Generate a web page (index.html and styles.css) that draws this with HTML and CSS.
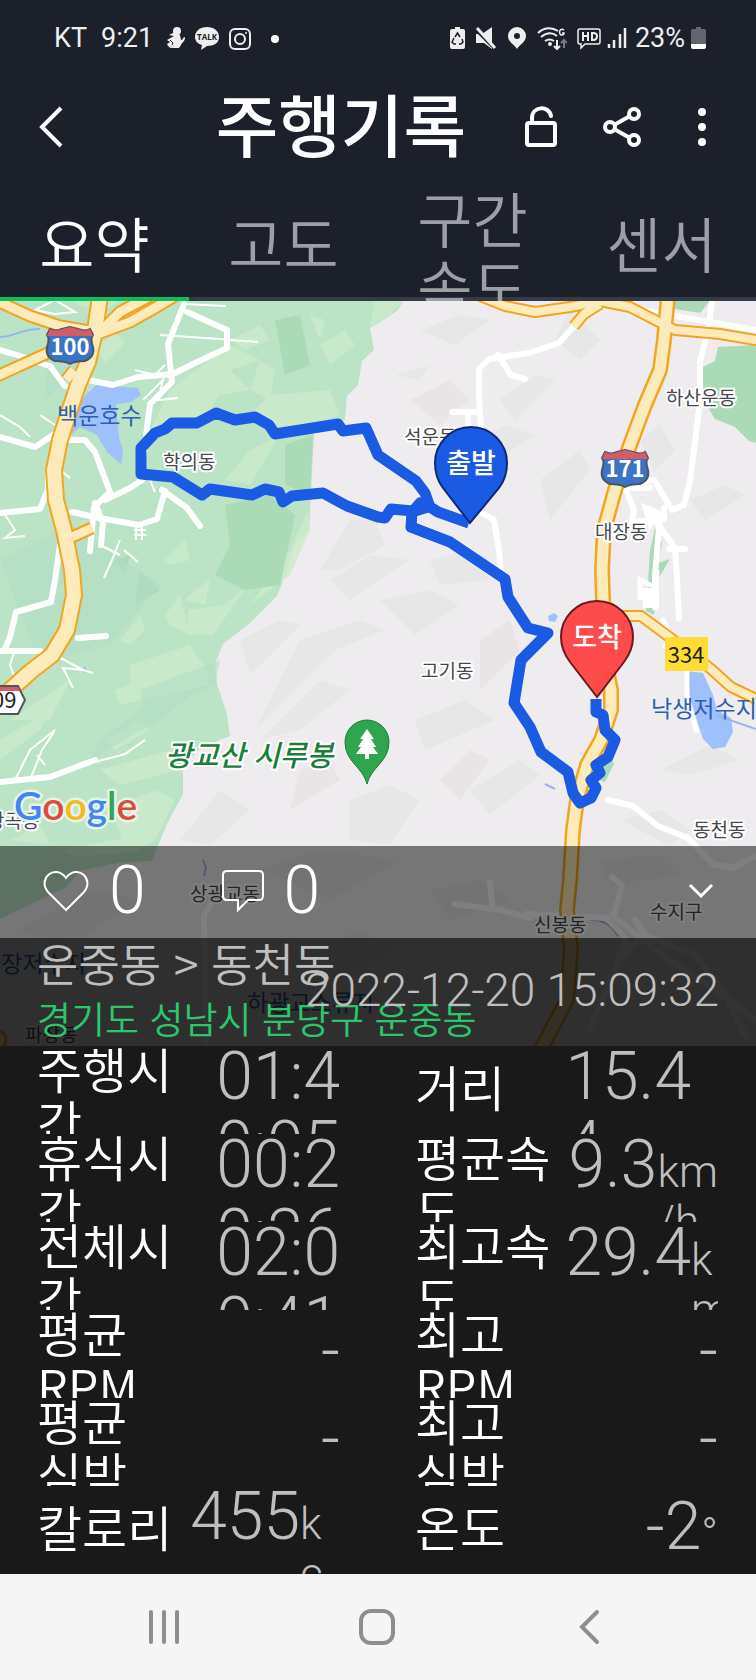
FILE: index.html
```html
<!DOCTYPE html>
<html lang="ko">
<head>
  <meta charset="UTF-8" />
  <title>주행기록</title>
  <meta name="viewport" content="width=device-width, initial-scale=1" />
  <link rel="stylesheet" href="styles.css">
</head>
<body>
  <!-- Phone status bar -->
  <div class="status">
    <div class="status-text"><span>KT</span><span>9:21</span></div>
    <div class="status-icons">
      <svg width="18" height="24" viewBox="0 0 18 24"><circle cx="10" cy="5" r="4" fill="#eee"/><path d="M2 9l6-3 5 3 1 5c3 0 1-3 4-3 0 5-3 5-4 8l-2 3H5c-3 0-4-2-5-4l3-2-3-2 7-4z" fill="#eee"/><path d="M3 14l3 3-1 2" stroke="#1b202a" fill="none"/></svg>
      <svg width="24" height="24" viewBox="0 0 24 24"><path d="M12 1c7 0 12 4 12 10s-5 9-12 9l-6 4 1-5C3 18 0 15 0 11 0 5 5 1 12 1z" fill="#eee"/><text class="talk" x="12" y="14">TALK</text></svg>
      <svg width="22" height="24" viewBox="0 0 22 24" fill="none" stroke="#eee" stroke-width="2"><rect x="1" y="3" width="20" height="20" rx="5"/><circle cx="11" cy="13" r="5"/><circle cx="17" cy="7" r="1" fill="#eee" stroke="none"/></svg>
      <svg width="32" height="24" viewBox="0 0 32 24"><circle cx="14" cy="13" r="4" fill="#fff"/></svg>
    </div>
    <div class="status-icons status-right">
      <svg width="15" height="24" viewBox="0 0 15 24"><path d="M5 1h5v2h3q2 0 2 2v16q0 2-2 2H2q-2 0-2-2V5q0-2 2-2h3z" fill="#eee"/><path d="M5 11l2.500-4L10 11M12 13l1 3-2 2H9M6 18H4l-2-2 2-4" stroke="#1b202a" stroke-width="1.500" fill="none"/></svg>
      <svg width="22" height="24" viewBox="0 0 22 24"><path d="M1 8h6l10-7v22l-8-6H1z" fill="#eee"/><path d="M2 5l19 19" stroke="#1b202a" stroke-width="3"/><path d="M2 2l18 20" stroke="#eee" stroke-width="3"/></svg>
      <svg width="20" height="24" viewBox="0 0 20 24"><path d="M10 1a9 9 0 0 1 9 9c0 6-6 8-9 13-3-5-9-7-9-13a9 9 0 0 1 9-9z" fill="#eee"/><circle cx="10" cy="10" r="3" fill="#1b202a"/></svg>
      <svg width="30" height="24" viewBox="0 0 30 24" fill="none" stroke="#eee" stroke-width="2"><path d="M1 7c6-6 14-6 20-2M4 11c5-4 11-5 16-1M8 15c3-2 6-2 9 0"/><circle cx="13" cy="18" r="1"/><path d="M20 14v9m-3-3l3 3 3-3"/><path d="M27 22v-8m-3 3l3-3 3 3" stroke="#777a80"/><path d="M27 4c-5-3-6 5-2 5 2 0 2-2 2-2h-2" stroke-width="1.500"/></svg>
      <svg width="24" height="24" viewBox="0 0 24 24" fill="none" stroke="#eee"><path d="M3 3h18q2 0 2 2v11q0 2-2 2H8l-4 4v-4H3q-2 0-2-2V5q0-2 2-2z" stroke-width="1.500"/><path d="M6 6v9M11 6v9M6 10h5M15 7v7h1q4 0 4-4 0-3-4-3z" stroke-width="2"/></svg>
    </div>
    <div class="status-power">
      <svg width="22" height="24" viewBox="0 0 22 24" stroke="#eee" stroke-width="2.500"><path d="M2 22v-4M7 22v-8M13 22V8M18 22V2"/></svg>
      <span>23%</span>
      <svg width="15" height="24" viewBox="0 0 15 24"><path d="M5 1h5v2h3q2 0 2 2v13H0V5q0-2 2-2h3z" fill="#63666e"/><path d="M0 18h15v3q0 2-2 2H2q-2 0-2-2z" fill="#fff"/></svg>
    </div>
  </div>

  <header class="topbar">
    <button type="button" aria-label="뒤로"><svg width="26" height="42" viewBox="0 0 26 42" fill="none" stroke="#fff" stroke-width="4"><path d="M23 2L4 21l19 19"/></svg></button>
    <h1>주행기록</h1>
    <div class="actions">
      <button type="button" aria-label="잠금"><svg width="34" height="44" viewBox="0 0 34 44" fill="none" stroke="#fff" stroke-width="4"><rect x="3" y="18" width="28" height="22" rx="2"/><path d="M8 18v-5c0-12 17-13 19-2" stroke-linecap="round"/></svg></button>
      <button type="button" aria-label="공유"><svg width="40" height="42" viewBox="0 0 40 42" fill="none" stroke="#fff" stroke-width="4"><circle cx="8" cy="21" r="5"/><circle cx="32" cy="8" r="5"/><circle cx="32" cy="34" r="5"/><path d="M12 19l16-9M12 23l16 9"/></svg></button>
      <button type="button" aria-label="더보기"><svg width="20" height="38" viewBox="-12 0 20 38" fill="#fff"><circle cx="4" cy="4" r="4"/><circle cx="4" cy="19" r="4"/><circle cx="4" cy="34" r="4"/></svg></button>
    </div>
  </header>

  <nav class="tabs">
    <a class="active" href="#summary">요약</a>
    <a href="#altitude">고도</a>
    <a href="#speed">구간<br>속도</a>
    <a href="#sensor">센서</a>
  </nav>

  <main id="summary">
    <div class="map">
      <svg class="map-canvas" viewBox="0 301 756 745" role="img" aria-label="주행 경로 지도">
        <rect x="0" y="301" width="756" height="745" fill="#efecef"/>

        <!-- relief -->
        <g fill="#e5e5e6" opacity="0.7">
          <path d="M420 330l40-15 30 5-35 25zM395 375l35-10-10 15zM500 400l35-25 20 5-40 40zM555 340l15-30 30 30-20 20zM480 440l25-15 30 10-30 20zM540 480l40-30 10 20-40 50zM430 560l40-10 20 30-50 5zM350 520l25 0 10 25-45 25-20 0zM330 580l40-25 40 5-60 40zM300 640l60-20 25 10-50 20-50 50-30 30zM240 640l40-20 20 5-50 50zM260 740l60-60 30 10-50 40zM380 600l50-10 30 15-45 30zM415 720l50-20 30 20-70 30zM350 800l40-15 30 15-30 45-40-5zM470 790l50-30 20 15-50 40zM620 820l40-10 30 20-20 16zM640 440l20-15 15 25-20 20zM690 500l35-15 20 10-40 25zM660 770l50-25 30 15-50 15zM180 840l40-50 30 20-40 35zM260 870l60-20 80 10-70 40zM20 930l70-40 50 10-80 50zM290 960l70-30 40 20-60 30zM430 890l50-10 30 20-60 20zM600 860l60-5 20 20-70 10z"/>
        </g>
        <g fill="#e9e4e6">
          <path d="M410 400l40-20 20 20-30 25zM480 640l30-20 10 30-40 40zM440 780l30-30 20 10-30 40zM300 770l30-10 10 20-50 30z"/>
        </g>

        <!-- forest -->
        <path d="M0 301h403l-5 9-13 9-15 9 4 22-12 11-4 24-11 11-2 24-31 13-5 98-13 12-13 38-6 15-27 27-27 21-8 20 2 20 10 30 3 22-30 12-17 20 0 26-16 30-15 37-35 2-37 8-15 17-38 18-27 13z" fill="#bbe3c6"/>
        <g fill="#cdebcb" opacity="0.8">
          <path d="M170 390l60-45 30 15-30 10 20 20-30 5-15 20-55 15zM230 340l30-15 10 15-25 10zM260 360l15 10-5 30-20-10zM310 315l15 5-5 20zM320 345l25-15 10 15-25 20zM270 395l60-5 10 25-60 20-30-20zM225 480l25-30 30-15-30 50zM290 550l18-40 2 20-20 45-40 30zM165 560l20-20 5 20-20 5zM95 348l20-15 10 10-20 20zM195 590l15-10-5 25-20-5zM165 615l15-20 10 40-20-10zM188 610l35-5 25-20-35 50-25 0zM120 640l20-25 5 15-15 15zM130 665l60-20 20 30-80 10zM115 690l60-20 20-15 15 30-90 20zM105 740l35-20 10 10-35 20zM100 770l70-20 10 20-60 15zM110 810l45-20 20 10-20 40-30 5zM10 840l30-15 10 20zM10 720l60-40-20 40zM0 740l50-30-10 20-40 30zM55 590l20-15 5 20zM70 301l50 0-20 12zM375 301h28l-15 16-18 9zM60 850l80-15 15 5-20 12-60 5z"/>
        </g>
        <g fill="#abdab6">
          <path d="M225 505l45-10 25 20-15 70-35 5-30-15 15-30zM285 445l28-10-3 60-25-10zM275 320l25-5 10 50-25 10zM115 560l15-5-5 20zM140 570l20 20-25 15z"/>
        </g>
        <path d="M0 560l70-35 90 60-50 60-70 20zM50 320l40 40-45 40zM140 690l80-30-5 25-70 30zM100 740l60-45 50-15-50 40-70 40z" fill="#b3dec6" opacity="0.6"/>
        <path d="M756 345l-38 2-3 14-12 6 0 32 12 20 20 8 14 14 7 2zM675 301h35l-10 12-25-4zM655 528l7 15-4 20 12-4-12 20-4 36-8-4 4-60zM605 782l9-18-4-8-10 12-2 12z" fill="#abdab6"/>

        <!-- water -->
        <g fill="#9ec1fb">
          <path d="M96 385l42 3 3 7-10 7-15 2 3 34 4 12-2 14-14-12-10-17-17-8-12 10-4-7 20-33z"/>
          <path d="M686 671l17 2 10 22 4 15 14 8 2 14-8 15-12 2-10-10-5-15-12-35zM548 616l6-3 4 3-3 6-6-1zM84 665l4 6-5 2z"/>
        </g>
        <path d="M0 337c15 0 20-8 40-8M45 360l20 20M545 784l10 5M715 715l41 14M203 860l3 8-2 8M590 920c14 0 20 4 28 16" fill="none" stroke="#9ab5ea" stroke-width="2"/>

        <!-- local roads -->
        <g fill="none" stroke="#fff" stroke-width="6" stroke-linejoin="round" stroke-linecap="round">
          <path d="M0 350l20 6 30 10 15 20M184 304l-16 40 4 38-22 22-4 32-4 36M88 380l25 5 25-8 35-3 20-10 34-16 0-18-40-18M70 440l15 0 10 12 15 40-16 15-4 44M72 512l22 5 45 8 18-6 8-28M105 500l25-12 12-8M95 503l8 20-2 22M162 490l25 18 13 18M0 437l35 10 18-12M0 513l40-4 8-20 0-20M60 545l-5 35-4 22-35 10-6 25-6 14-4 0M0 651h40M78 638l28-2M0 782l50-5 45-17"/>
          <path d="M575 325l-16 18-30 10-40 6-10 10 0 30 2 27M498 355l13 20 14 4M482 513l12 7 5 30 2 22M480 412h-28M468 412v16M712 301l-4 30-8 30 0 40-10 80-6 24-12 5-18-30-14 2-14 8 8 20-2 12 32-3 0-11M655 520l20 28 2 30 2 40M640 310l116 20M608 800l25 6 25 20 30 12 25 26 20 4 23-12"/>
          <path d="M630 488l20 0M660 515l-5 60 0 20M685 549h-16M455 904l45 6 30 8M490 882l2 22M526 914l80 4 20 20-14 40-22 50M612 877l10 8-8 30M612 915l50 40 60 40 34 25M635 920l10 15 50 20 30 40 20 40M218 895l-14 20 2 130M642 935l-20 22"/>
        </g>
        <path d="M657 570l-2 40M640 600l0-20 12 6M662 618l10 20-8 10M665 645l22 25 0 25 10 38" fill="none" stroke="#fff" stroke-width="5"/>
        <path d="M644 506l14 6-8 14zM643 590l14 0 0 16-12 0z" fill="#fff" stroke="#fff" stroke-width="4"/>
        <g fill="none" stroke="#fff" stroke-width="2">
          <path d="M15 780l15-30 25-20M30 780l12-30 12-18M37 755l8 10M95 762l30-8 20-14M55 655l28 15-20-2 10 20M83 670l10 3M15 650l-5 15 8 22M35 310l20-10 20 12-20 2zM20 315l25 10M160 335l75 5M230 340l28 2M143 400l20-20-5 20 20-2M135 370l20 5 10-10M136 526v14M142 526v14M134 530h12M134 535h12M120 540l-8 20-8 18M124 550l14 12M100 545l20 10M5 515l10 15-10 8 20-2M0 415l20 12 10 10M150 480l5 12M55 425l-15-10M60 470l10 8M184 304l42 2"/>
        </g>

        <!-- expressways: casing, then fill -->
        <g fill="none" stroke="#f4a51f" stroke-linejoin="round">
          <path d="M100 296l-5 35-7 31-10 23-10 30-8 25-6 30 2 30 8 30 8 40 2 25-7 35-15 25-22 17-22 20-20 15" stroke-width="18"/>
          <path d="M-5 377l55-25 45-17 35-13 30-17 20-12M-5 300l35 16 30 10 35 6M104 328l16-16 30-16M66 380l8-10M72 537l20-9" stroke-width="13"/>
          <path d="M480 296l25 10 30 6 35-5 30-6 30 6 25 13 20 10 45 4 41 7M574 326l10-12 16-10M604 620l16-4 21 0 27 20 43 33 20 18 25 12" stroke-width="12"/>
          <path d="M668 296l-4 44-4 30-15 35-15 40-15 45-11 40-2 40 1 30 0 50 8 40 0 20-10 30-14 25-10 35-4 30-3 50-3 30 4 40-4 50-17 32-15 30" stroke-width="16"/>
        </g>
        <g fill="none" stroke="#feebbb" stroke-linejoin="round">
          <path d="M100 296l-5 35-7 31-10 23-10 30-8 25-6 30 2 30 8 30 8 40 2 25-7 35-15 25-22 17-22 20-20 15" stroke-width="14"/>
          <path d="M-5 377l55-25 45-17 35-13 30-17 20-12M-5 300l35 16 30 10 35 6M104 328l16-16 30-16M66 380l8-10M72 537l20-9" stroke-width="9"/>
          <path d="M480 296l25 10 30 6 35-5 30-6 30 6 25 13 20 10 45 4 41 7M574 326l10-12 16-10M604 620l16-4 21 0 27 20 43 33 20 18 25 12" stroke-width="8"/>
          <path d="M668 296l-4 44-4 30-15 35-15 40-15 45-11 40-2 40 1 30 0 50 8 40 0 20-10 30-14 25-10 35-4 30-3 50-3 30 4 40-4 50-17 32-15 30" stroke-width="11"/>
        </g>
        <circle cx="-4" cy="1040" r="10" fill="#feebbb" stroke="#f4a51f" stroke-width="3"/>

        <!-- place names -->
        <g class="place">
          <text x="163" y="469">학의동</text>
          <text x="404" y="444">석운동</text>
          <text x="666" y="405">하산운동</text>
          <text x="595" y="539">대장동</text>
          <text x="421" y="678">고기동</text>
          <text x="693" y="837">동천동</text>
          <text x="-13" y="828">왕곡동</text>
          <text x="190" y="901">상광교동</text>
          <text x="534" y="932">신봉동</text>
          <text x="650" y="919">수지구</text>
          <text x="25" y="1042">파장동</text>
        </g>
        <g class="place lake">
          <text x="57" y="424">백운호수</text>
          <text x="651" y="717">낙생저수지</text>
          <text x="-20" y="972">파장저수지</text>
          <text x="247" y="1011">하광교소류지</text>
        </g>
        <text class="place peak" x="165" y="766">광교산 시루봉</text>

        <!-- road shields -->
        <g stroke="#4d5560" stroke-width="2">
          <path d="M50 329q6 3 12 0l8-2 8 2q7 3 12 0l3 6q-3 4 0 12 2 10-8 14-10 0-15 3-5-3-15-3-10-4-8-14 3-8 0-12z" fill="#3b74c4"/>
          <path d="M605 452q6 3 12 0l8-2 8 2q7 3 12 0l3 6q-3 4 0 12 2 10-8 14-10 0-15 3-5-3-15-3-10-4-8-14 3-8 0-12z" fill="#3b74c4"/>
          <path d="M50 329q6 3 12 0l8-2 8 2q7 3 12 0l3 7H47zM605 452q6 3 12 0l8-2 8 2q7 3 12 0l3 7h-46z" fill="#d35c66" stroke="none"/>
          <path d="M-5 686h23l7 14-7 14H-5z" fill="#fff"/>
          <path d="M-5 687h23l2 4H-5z" fill="#d35c66" stroke="none"/>
        </g>
        <rect x="665" y="637" width="43" height="34" fill="#fddc35"/>
        <text class="shield" x="70" y="355">100</text>
        <text class="shield" x="625" y="477">171</text>
        <text class="shield-dark" x="-8" y="708">09</text>
        <text class="shield-dark mid" x="686" y="663">334</text>

        <!-- ride track -->
        <path d="M469 523l-31-11-8-5-5-14-9-12-38-26-12-27-23 3-5-7-63 10-6-9-14-8-20 3-19-7-19 10h-25l-7 6-10 4-14 15v26l32 3 29 18 8-6 42 6 13-6 14 3 4 10 9-6 31-3 24 13 31 11 7 1 6-9 22 2 7-8 8 4-16 5-1 15 39 15 55 37 3 18 20 31 20 5-27 27-7 43 16 24 11 25 27 20 5 21 7 10 11-5 5-10-5-8 9-7-4-8 12-8 7-17-10-10-2-15-7-3v-13" fill="none" stroke="#1b5ae2" stroke-width="11" stroke-linejoin="round"/>

        <path d="M470 523l-27-35c-6-8-8-17-8-25a36 36 0 0 1 72 0c0 8-2 17-8 25z" fill="#1b5ae2" stroke="#0d2b74" stroke-width="2"/>
        <text class="pin" x="471" y="473">출발</text>
        <path d="M597 697l-27-35c-6-8-9-17-9-25a36 36 0 0 1 72 0c0 8-3 17-9 25z" fill="#fd4b4b" stroke="#6b1a1e" stroke-width="2"/>
        <text class="pin" x="597" y="647">도착</text>
        <path d="M367 784c-4-17-22-22-22-42a22 22 0 0 1 44 0c0 20-18 25-22 42z" fill="#31a44f" stroke="#1c7a3a"/>
        <path d="M367 729l7 10h-3l5 8h-3l5 7h-9v5h-4v-5h-9l5-7h-3l5-8h-3z" fill="#fff"/>

        <text class="logo" x="14" y="820"><tspan fill="#4285f4">G</tspan><tspan fill="#dd4b3e">o</tspan><tspan fill="#f4b81c">o</tspan><tspan fill="#4285f4">g</tspan><tspan fill="#34a353">l</tspan><tspan fill="#dd4b3e">e</tspan></text>
      </svg>

      <div class="overlay">
        <div class="social">
          <button type="button" aria-label="좋아요"><svg width="46" height="44" viewBox="0 0 46 44" fill="none" stroke="#fff" stroke-width="2"><path d="M23 41L5 23C-6 10 12-6 23 9 34-6 52 10 41 23z"/></svg><span>0</span></button>
          <button type="button" aria-label="댓글"><svg width="42" height="44" viewBox="0 0 42 44" fill="none" stroke="#fff" stroke-width="2"><path d="M5 2h32q4 0 4 4v21q0 4-4 4H26L16 41V31H5q-4 0-4-4V6q0-4 4-4z"/></svg><span>0</span></button>
          <button type="button" class="fold" aria-label="접기"><svg width="26" height="16" viewBox="0 0 26 16" fill="none" stroke="#fff" stroke-width="3"><path d="M2 2l11 11L24 2"/></svg></button>
        </div>
        <div class="trip">
          <p class="trip-title">운중동 &gt; 동천동</p>
          <p class="trip-address">경기도 성남시 분당구 운중동</p>
          <time datetime="2022-12-20T15:09:32">2022-12-20 15:09:32</time>
        </div>
      </div>
    </div>

    <!-- Ride figures -->
    <dl class="stats">
      <div><dt>주행시<br>간</dt><dd><span>01:4<br>0:05</span></dd></div>
      <div><dt>거리</dt><dd><span>15.4<br>4</span><small class="narrow"></small></dd></div>
      <div><dt>휴식시<br>간</dt><dd><span>00:2<br>0:36</span></dd></div>
      <div><dt>평균속<br>도</dt><dd><span>9.3</span><small>km<br>/h</small></dd></div>
      <div><dt>전체시<br>간</dt><dd><span>02:0<br>0:41</span></dd></div>
      <div><dt>최고속<br>도</dt><dd><span>29.4</span><small class="narrow">k<br>m</small></dd></div>
      <div><dt>평균<br>RPM</dt><dd><span>-</span></dd></div>
      <div><dt>최고<br>RPM</dt><dd><span>-</span></dd></div>
      <div><dt>평균<br>심박</dt><dd><span>-</span></dd></div>
      <div><dt>최고<br>심박</dt><dd><span>-</span></dd></div>
      <div><dt>칼로리</dt><dd><span>455</span><small class="wide">k<br>c</small></dd></div>
      <div><dt>온도</dt><dd><span>-2</span><small>°</small></dd></div>
    </dl>
  </main>

  <nav class="sysnav">
    <button type="button" aria-label="최근 앱"><svg width="34" height="36" viewBox="0 0 34 36" stroke="#8e8e8e" stroke-width="4" stroke-linecap="round"><path d="M4 3v30M17 3v30M30 3v30"/></svg></button>
    <button type="button" aria-label="홈"><svg width="36" height="36" viewBox="0 0 36 36" fill="none" stroke="#8e8e8e" stroke-width="4"><rect x="2" y="2" width="32" height="32" rx="10"/></svg></button>
    <button type="button" aria-label="뒤로"><svg width="22" height="36" viewBox="0 0 22 36" fill="none" stroke="#8e8e8e" stroke-width="4" stroke-linecap="round"><path d="M18 3L3 18l15 15"/></svg></button>
  </nav>
</body>
</html>
```
FILE: styles.css
```css
*{box-sizing:border-box}
html,body{margin:0}
body{min-height:100vh;display:flex;flex-direction:column;background:#191919;color:#fff;font-family:"Noto Sans CJK KR",sans-serif;font-weight:350}
button{background:none;border:0;padding:0;margin:0;color:inherit;font:inherit;display:flex;align-items:center}
svg{display:block;flex:none}

/* status bar */
.status{display:flex;align-items:center;height:76px;padding:0 50px 0 54px;background:#1b202a;color:#eee;font:27px/30px Roboto,sans-serif}
.status-text{display:flex;gap:14px;margin-right:14px}
.status-icons{display:flex;gap:10px}
.status-right{margin-left:auto}
.status-power{display:flex;align-items:center;gap:6px;margin-left:6px}
.talk{font:bold 8px "Open Sans",sans-serif;text-anchor:middle;fill:#1b202a}

/* title bar */
.topbar{display:flex;align-items:center;height:102px;padding:0 50px 0 38px;background:#1b202a}
.topbar h1{flex:1;margin:-8px 58px 0 0;text-align:right;font-size:68px;line-height:100px;font-weight:500;white-space:nowrap}
.actions{display:flex;align-items:center;justify-content:space-between;width:182px}

/* tabs */
.tabs{display:flex;height:123px;padding-top:5px;background:#1b202a}
.tabs a{flex:1;display:flex;align-items:safe center;justify-content:center;overflow:hidden;box-shadow:inset 0 -4px #353b46;color:#9c9fa5;font-size:60px;line-height:68px;text-decoration:none}
.tabs .active{color:#fff;box-shadow:inset 0 -4px #0bbf5b}

/* map */
main{flex:1;display:flex;flex-direction:column}
.map{position:relative;overflow:hidden}
.map-canvas{width:100%;height:auto}
.place{font-size:19px;font-weight:400;fill:#45484d;stroke:#fff;stroke-width:4px;stroke-linejoin:round;paint-order:stroke}
.lake{font-size:23px;fill:#2b5fb0;stroke:none}
.peak{font-size:29px;font-weight:500;font-style:italic;fill:#188038}
.shield{font-size:22px;font-weight:700;fill:#fff;text-anchor:middle}
.shield-dark{font-size:22px;font-weight:400;fill:#222}
.mid{text-anchor:middle}
.pin{font-size:27px;font-weight:500;fill:#fff;text-anchor:middle}
.logo{font:600 39px Lato,sans-serif;stroke:#e6f4ea;stroke-width:5px;stroke-linejoin:round;paint-order:stroke}

.overlay{position:absolute;left:0;right:0;bottom:0}
.social{display:flex;align-items:center;height:92px;padding:0 42px 2px 43px;gap:76px;background:rgba(0,0,0,0.5);font:300 66px/84px Roboto,sans-serif}
.social button{gap:20px}
.social .fold{margin-left:auto}
.trip{position:relative;height:108px;padding-left:37px;background:rgba(0,0,0,0.8)}
.trip p{margin:0;white-space:nowrap}
.trip-title{font-size:45px;line-height:50px;color:#bebebe}
.trip-address{font-size:37px;line-height:60px;color:#2cc66c}
.trip time{position:absolute;right:37px;top:25px;font:300 46px/54px Roboto,sans-serif;color:#bebebe}

/* figures */
.stats{flex:1;display:grid;grid-template-columns:1fr 1fr;grid-auto-rows:1fr;margin:0}
.stats div{display:flex;align-items:safe center;justify-content:space-between;height:88px;padding:0 38px 0 37px;overflow:hidden}
.stats dt{margin:-5px 0 5px;font-size:49px;line-height:53px;white-space:nowrap}
.stats dd{display:flex;align-items:baseline;margin:-4px 0 4px;font:300 66px/69px Roboto,sans-serif;color:#bebebe;white-space:nowrap}
.stats small{font-size:44px;line-height:50px}
.stats .narrow{width:27px;overflow:hidden}
.stats .wide{width:40px}

/* system navigation */
.sysnav{display:flex;height:106px;padding:0 60px 0 58px;background:#f5f5f5}
.sysnav button{flex:1;justify-content:center}
```
